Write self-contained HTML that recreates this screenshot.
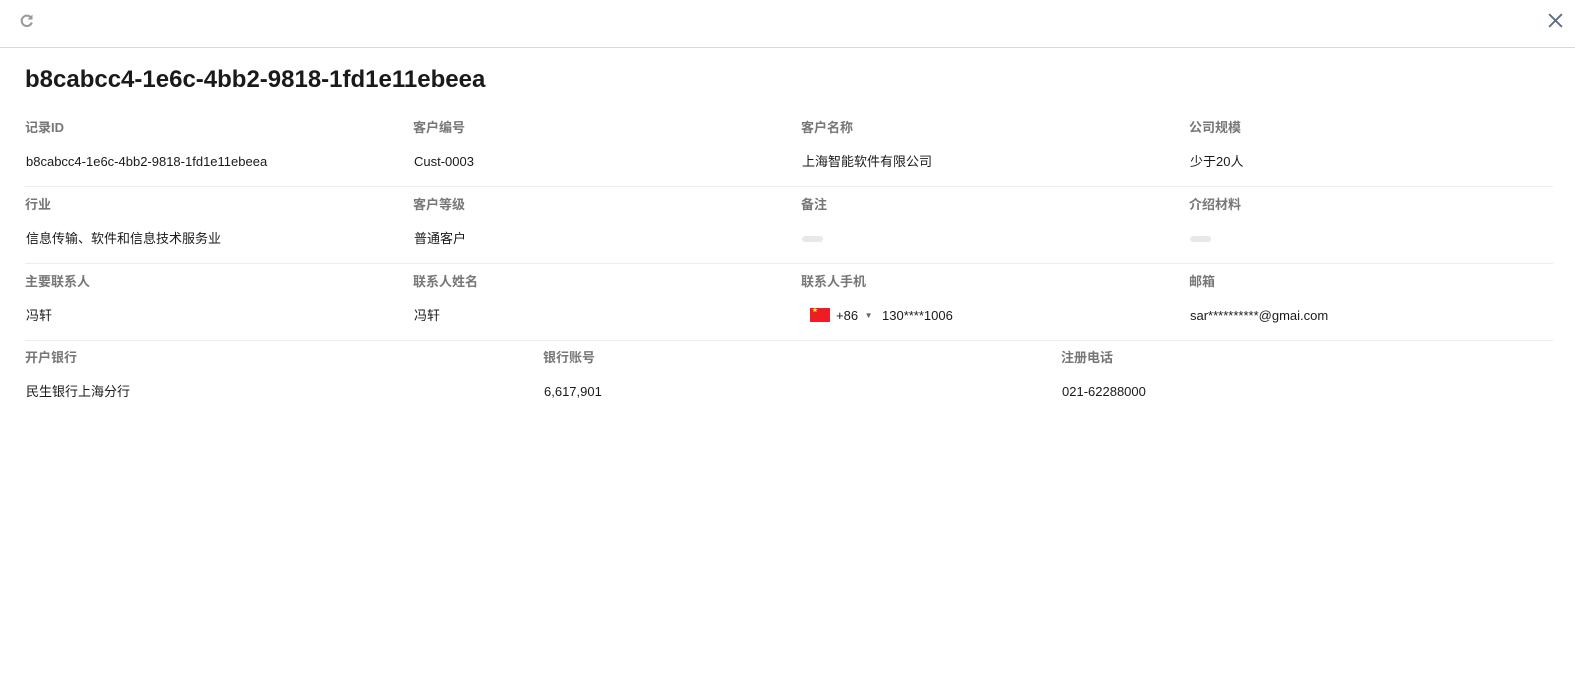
<!DOCTYPE html>
<html><head><meta charset="utf-8"><style>
*{margin:0;padding:0;box-sizing:border-box}
body{width:1575px;height:682px;background:#fff;font-family:"Liberation Sans","Noto Sans CJK SC",sans-serif;position:relative;overflow:hidden}
.hdr{position:absolute;left:0;top:0;width:1575px;height:48px;border-bottom:1px solid #d9d9d9}
h1{position:absolute;left:25px;top:65px;font-size:24px;font-weight:bold;color:#1a1a1a;line-height:30px}
.row{position:absolute;left:25px;width:1528px;height:77px;border-bottom:1px solid #ececec}
.l{position:absolute;font-size:13px;font-weight:bold;color:#777;line-height:16px;white-space:nowrap}
.v{position:absolute;font-size:13px;color:#1a1a1a;line-height:16px;white-space:nowrap}
.pill{position:absolute;width:21px;height:6px;border-radius:3px;background:#e8e8e8}
</style></head><body>
<div class="hdr">
<svg style="position:absolute;left:19px;top:13px" width="16" height="16" viewBox="0 0 16 16"><path d="M12.8 9.5A5.2 5.2 0 1 1 11.8 4.4" fill="none" stroke="#999" stroke-width="2"/><path d="M13.5 1.5v5h-5z" fill="#999"/></svg>
<svg style="position:absolute;left:1547px;top:12px" width="17" height="17" viewBox="0 0 16 16"><path d="M2 2L14 14M14 2L2 14" stroke="#5a6a80" stroke-width="1.8"/></svg>
</div>
<h1>b8cabcc4-1e6c-4bb2-9818-1fd1e11ebeea</h1>
<div class="row" style="top:110px"></div>
<div class="row" style="top:187px"></div>
<div class="row" style="top:264px"></div>

<div class="l" style="left:25px;top:120px">记录ID</div>
<div class="l" style="left:413px;top:120px">客户编号</div>
<div class="l" style="left:801px;top:120px">客户名称</div>
<div class="l" style="left:1189px;top:120px">公司规模</div>
<div class="v" style="left:26px;top:154px">b8cabcc4-1e6c-4bb2-9818-1fd1e11ebeea</div>
<div class="v" style="left:414px;top:154px">Cust-0003</div>
<div class="v" style="left:802px;top:154px">上海智能软件有限公司</div>
<div class="v" style="left:1190px;top:154px">少于20人</div>

<div class="l" style="left:25px;top:197px">行业</div>
<div class="l" style="left:413px;top:197px">客户等级</div>
<div class="l" style="left:801px;top:197px">备注</div>
<div class="l" style="left:1189px;top:197px">介绍材料</div>
<div class="v" style="left:26px;top:231px">信息传输、软件和信息技术服务业</div>
<div class="v" style="left:414px;top:231px">普通客户</div>
<div class="pill" style="left:802px;top:236px"></div>
<div class="pill" style="left:1190px;top:236px"></div>

<div class="l" style="left:25px;top:274px">主要联系人</div>
<div class="l" style="left:413px;top:274px">联系人姓名</div>
<div class="l" style="left:801px;top:274px">联系人手机</div>
<div class="l" style="left:1189px;top:274px">邮箱</div>
<div class="v" style="left:26px;top:308px">冯轩</div>
<div class="v" style="left:414px;top:308px">冯轩</div>
<div style="position:absolute;left:810px;top:308px;width:20px;height:14px;background:#ee1c25"><span style="position:absolute;left:2px;top:0;color:#ff0;font-size:6px;line-height:7px">★</span></div>
<div class="v" style="left:836px;top:308px">+86 <span style="font-size:8px;color:#666;margin-left:3px;vertical-align:2px">▼</span></div>
<div class="v" style="left:882px;top:308px">130****1006</div>
<div class="v" style="left:1190px;top:308px">sar**********@gmai.com</div>

<div class="l" style="left:25px;top:350px">开户银行</div>
<div class="l" style="left:543px;top:350px">银行账号</div>
<div class="l" style="left:1061px;top:350px">注册电话</div>
<div class="v" style="left:26px;top:384px">民生银行上海分行</div>
<div class="v" style="left:544px;top:384px">6,617,901</div>
<div class="v" style="left:1062px;top:384px">021-62288000</div>
</body></html>
